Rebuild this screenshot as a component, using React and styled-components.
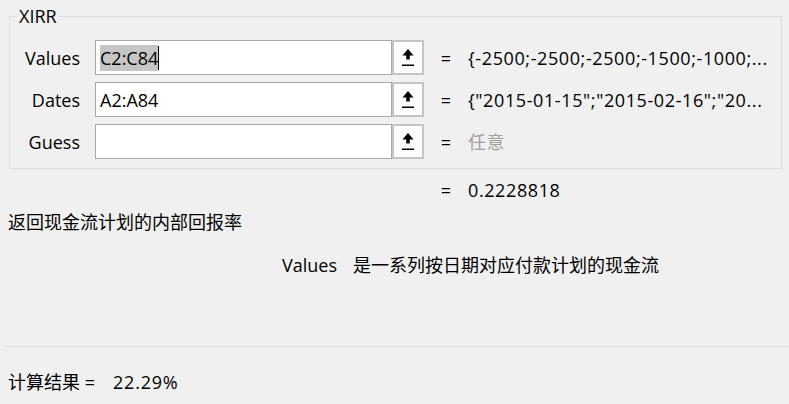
import React from "react";
import styled, { createGlobalStyle } from "styled-components";

const Global = createGlobalStyle`
  html, body { margin: 0; padding: 0; }
  body {
    background: #f0f0f0;
    width: 789px;
    height: 404px;
    overflow: hidden;
    font-family: "Open Sans", "Noto Sans CJK SC", sans-serif;
    font-size: 18px;
    color: #000;
  }
`;

const Page = styled.div`
  display: flex;
  flex-direction: column;
  width: 789px;
  height: 404px;
`;

const Group = styled.fieldset`
  margin: 4px 7px 0 9px;
  padding: 12px 0 9px 0;
  border: 1px solid #dcdcdc;
  min-width: 0;
`;

const Legend = styled.legend`
  margin-left: 7px;
  padding: 0 2px;
  line-height: 24px;
`;

const Rows = styled.div`
  display: flex;
  flex-direction: column;
  gap: 7px;
`;

const Grid = styled.div`
  display: grid;
  grid-template-columns: 85px 329px 44px 1fr;
  align-items: center;
  height: ${(p) => p.$h || 35}px;
  margin-left: ${(p) => p.$ml || 0}px;
  margin-top: ${(p) => p.$mt || 0}px;
`;

const Label = styled.div`
  text-align: right;
  padding-right: 15px;
  line-height: 24px;
  white-space: nowrap;
`;

const InputWrap = styled.div`
  display: flex;
  height: 35px;
`;

const Field = styled.div`
  flex: 1;
  display: flex;
  align-items: center;
  background: #fff;
  border: 1px solid #a9a9a9;
  padding-left: 4px;
  line-height: 26px;
  white-space: nowrap;
`;

const Selected = styled.span`
  background: #c6c6c6;
  display: inline-block;
  line-height: 26px;
`;

const Caret = styled.span`
  display: inline-block;
  width: 1px;
  height: 24px;
  background: #000;
`;

const RefButton = styled.div`
  width: 32px;
  box-sizing: border-box;
  border: 2px solid #c4c4c4;
  background: #fdfdfd;
  display: flex;
  align-items: center;
  justify-content: center;
`;

const Eq = styled.div`
  text-align: center;
  line-height: 24px;
`;

const Val = styled.div`
  line-height: 24px;
  white-space: nowrap;
  overflow: hidden;
  letter-spacing: 0.6px;
  color: ${(p) => (p.$muted ? "#a0a0a0" : "#000")};
`;

const Desc = styled.div`
  margin: ${(p) => p.$mt}px 0 0 ${(p) => p.$ml}px;
  line-height: 24px;
  display: flex;
  gap: ${(p) => p.$gap || 0}px;
  white-space: nowrap;
`;

const Separator = styled.div`
  margin: 69px 0 0 6px;
  height: 1px;
  background: #dcdcdc;
`;

const Footer = styled.div`
  margin: 23px 0 0 8px;
  line-height: 24px;
  display: flex;
  gap: 18px;
  white-space: nowrap;
`;

const Percent = styled.span`
  letter-spacing: 0.8px;
`;

const UpArrow = () => (
  <svg width="14" height="19" viewBox="0 0 14 19">
    <polygon points="7,1 12.5,7.5 1.5,7.5" fill="#000" />
    <rect x="5.25" y="7" width="3.5" height="4.5" fill="#000" />
    <rect x="1" y="16.5" width="12" height="1.5" fill="#000" />
  </svg>
);

const args = [
  {
    name: "Values",
    input: (
      <>
        <Selected>C2:C84</Selected>
        <Caret />
      </>
    ),
    value: "{-2500;-2500;-2500;-1500;-1000;...",
  },
  {
    name: "Dates",
    input: "A2:A84",
    value: '{"2015-01-15";"2015-02-16";"20...',
  },
  { name: "Guess", input: "", value: "任意", muted: true },
];

export default function App() {
  return (
    <>
      <Global />
      <Page>
        <Group>
          <Legend>XIRR</Legend>
          <Rows>
            {args.map((a) => (
              <Grid key={a.name}>
                <Label>{a.name}</Label>
                <InputWrap>
                  <Field>{a.input}</Field>
                  <RefButton>
                    <UpArrow />
                  </RefButton>
                </InputWrap>
                <Eq>=</Eq>
                <Val $muted={a.muted}>{a.value}</Val>
              </Grid>
            ))}
          </Rows>
        </Group>
        <Grid $h={24} $ml={10} $mt={9}>
          <span />
          <span />
          <Eq>=</Eq>
          <Val>0.2228818</Val>
        </Grid>
        <Desc $mt={8} $ml={8}>返回现金流计划的内部回报率</Desc>
        <Desc $mt={19} $ml={282} $gap={16}>
          <span>Values</span>
          <span>是一系列按日期对应付款计划的现金流</span>
        </Desc>
        <Separator />
        <Footer>
          <span>计算结果 =</span>
          <Percent>22.29%</Percent>
        </Footer>
      </Page>
    </>
  );
}
